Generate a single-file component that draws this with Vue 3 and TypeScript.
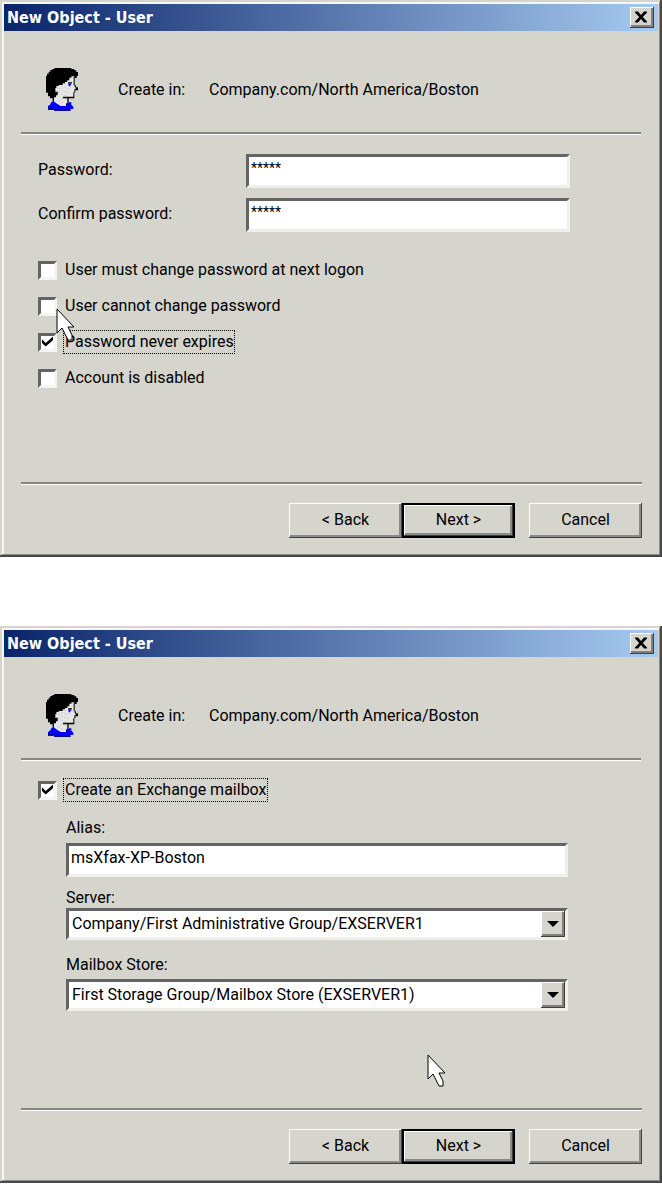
<script setup lang="ts">
import { reactive, ref } from 'vue'

interface Option {
  id: string
  label: string
  checked: boolean
  focused: boolean
}

const title = 'New Object - User'
const location = 'Company.com/North America/Boston'

const password = ref('*****')
const confirmation = ref('*****')

const options = reactive<Option[]>([
  { id: 'must-change', label: 'User must change password at next logon', checked: false, focused: false },
  { id: 'cannot-change', label: 'User cannot change password', checked: false, focused: false },
  { id: 'never-expires', label: 'Password never expires', checked: true, focused: true },
  { id: 'disabled', label: 'Account is disabled', checked: false, focused: false },
])

const createMailbox = ref(true)
const alias = ref('msXfax-XP-Boston')

const lists = reactive([
  { id: 'server', label: 'Server:', value: 'Company/First Administrative Group/EXSERVER1' },
  { id: 'store', label: 'Mailbox Store:', value: 'First Storage Group/Mailbox Store (EXSERVER1)' },
])

const steps = ['password', 'mailbox'] as const
</script>

<template>
  <main class="page">
    <section v-for="step in steps" :key="step" class="window" :aria-label="title">
      <header class="titlebar">
        <h1>{{ title }}</h1>
        <button type="button" class="close" aria-label="Close">
          <svg width="14" height="12" viewBox="0 0 14 12" aria-hidden="true">
            <path d="M1 0.5h3l3 3.5 3-3.5h3v1L8.8 6l4.2 4.5v1h-3L7 8l-3 3.5H1v-1L5.2 6 1 1.5z" />
          </svg>
        </button>
      </header>

      <div class="summary">
        <svg class="face" width="32" height="43" viewBox="6 6 96 129" aria-hidden="true">
          <path d="M32 60L58 48L72 32H89V58L98 68V73L91 75V94H73V122H30V84Z" fill="#e6e6e6" />
          <path d="M62 54h3v3h-3zm-9 6h3v3h-3zm9 3h3v3h-3zm9 3h3v3h-3zm-27 0h3v3h-3zm9 6h3v3h-3zm9 3h3v3h-3zm9 3h3v3h-3zm-27 0h3v3h-3zm9 6h3v3h-3zm9 3h3v3h-3zm-9 9h3v3h-3zm-9 6h3v3h-3zm9 6h3v3h-3zm9-9h3v3h-3z" fill="#b8b8b8" />
          <path d="M31 6H82V9H91V13H97V18H102V30H98V36H91V31H82V35H76V43H70V48H63V52H56V57H44V60H37V66H34V77H41V88H36V94H30V97H18V91H12V80H6V30H9V23H14V17H19V12H25V9H31Z" />
          <path d="M72 49H84V52H72ZM89 34H92V58H89ZM92 58H96V64H102V73H94V79H91V94H88V79H91V70H95V64H92ZM57 92H91V97H57ZM70 97H74V118H70ZM26 94H30V108H26Z" />
          <path d="M73 52H82V56H79V61H74Z" fill="#0000f0" />
          <path d="M23 107H31L39 113L50 120H68V115L75 109H82V116L88 122V129H79V134H30V131H12V120L18 116Z" fill="#0000f8" />
          <path d="M12 127H28V131H12ZM66 112H70V120H66ZM30 131H80V134H30Z" fill="#000070" />
        </svg>
        <span class="caption">Create in:</span>
        <span>{{ location }}</span>
      </div>

      <form v-if="step === 'password'" class="body" @submit.prevent>
        <div class="field">
          <label for="password">Password:</label>
          <input id="password" v-model="password" class="textbox masked" type="text" autocomplete="off" />
        </div>
        <div class="field">
          <label for="confirmation">Confirm password:</label>
          <input id="confirmation" v-model="confirmation" class="textbox masked" type="text" autocomplete="off" />
        </div>
        <div class="options">
          <div v-for="option in options" :key="option.id" class="option">
            <input :id="option.id" v-model="option.checked" type="checkbox" />
            <svg class="tick" viewBox="0 0 12 11" aria-hidden="true"><path d="M0 3L4 7L12 0V4L4 11L0 7Z" /></svg>
            <label :for="option.id" :class="{ focused: option.focused }">{{ option.label }}</label>
            <svg v-if="option.id === 'cannot-change'" class="pointer on-option" viewBox="0 0 19 33" aria-hidden="true">
              <path d="M1 1V25L6 20L12 32H16V27L12 19H18Z" />
            </svg>
          </div>
        </div>
      </form>

      <form v-else class="body" @submit.prevent>
        <div class="option mailbox">
          <input id="mailbox" v-model="createMailbox" type="checkbox" />
          <svg class="tick" viewBox="0 0 12 11" aria-hidden="true"><path d="M0 3L4 7L12 0V4L4 11L0 7Z" /></svg>
          <label for="mailbox" class="focused">Create an Exchange mailbox</label>
        </div>
        <div class="stack">
          <label for="alias">Alias:</label>
          <input id="alias" v-model="alias" class="textbox" type="text" />
        </div>
        <div v-for="list in lists" :key="list.id" class="stack" :class="list.id">
          <label :for="list.id">{{ list.label }}</label>
          <div class="combo">
            <select :id="list.id" v-model="list.value">
              <option>{{ list.value }}</option>
            </select>
            <span class="arrow">
              <svg width="12" height="6" viewBox="0 0 12 6" aria-hidden="true"><path d="M0 0H12L6 6Z" /></svg>
            </span>
          </div>
        </div>
        <svg class="pointer on-canvas" viewBox="0 0 19 33" aria-hidden="true">
          <path d="M1 1V25L6 20L12 32H16V27L12 19H18Z" />
        </svg>
      </form>

      <footer class="actions">
        <button type="button" class="push">&lt; Back</button>
        <button type="button" class="push default">Next &gt;</button>
        <button type="button" class="push cancel">Cancel</button>
      </footer>
    </section>
  </main>
</template>

<style>
body {
  margin: 0;
  background: #fff;
}
</style>

<style scoped>
* {
  box-sizing: border-box;
}

.page {
  display: flex;
  flex-direction: column;
  gap: 69px;
  font: 16px/20px Roboto, "Liberation Sans", sans-serif;
  color: #000;
}

.window {
  display: flex;
  flex-direction: column;
  padding: 4px;
  background: #d6d5cd;
  box-shadow: inset -2px -2px #484848, inset 2px 2px #d6d5cd, inset -3px -3px #8c8c88, inset 4px 4px #f6f6f2;
}

.titlebar {
  display: flex;
  align-items: center;
  justify-content: space-between;
  height: 27px;
  padding: 0 4px 0 3px;
  background: linear-gradient(90deg, #0a246a, #a6caf0);
}

h1 {
  margin: 0;
  font: bold 16px/24px "DejaVu Sans Condensed", "Noto Sans", sans-serif;
  color: #fff;
}

button,
input,
select {
  font: inherit;
  color: inherit;
  border-radius: 0;
}

.close {
  display: grid;
  place-items: center;
  width: 24px;
  height: 21px;
  padding: 0 2px 2px 0;
  border: 0;
  background: #d6d5cd;
  box-shadow: inset -1px -1px #404040, inset 1px 1px #fff, inset -3px -3px #808080;
}

.summary {
  display: flex;
  align-items: center;
  height: 101px;
  margin: 0 17px;
  padding: 16px 0 0 25px;
}

.face {
  flex: none;
  margin-right: 40px;
}

.caption {
  width: 91px;
}

.body {
  position: relative;
  height: 350px;
  margin: 0 17px;
  padding: 20px 71px 0 17px;
  border-top: 2px solid #868682;
  box-shadow: inset 0 1px #fff;
}

.field {
  display: grid;
  grid-template-columns: 208px 1fr;
  margin-bottom: 10px;
}

.field label {
  padding-top: 6px;
}

.textbox {
  width: 100%;
  height: 34px;
  padding: 0 4px 5px 2px;
  border: 3px solid;
  border-color: #646464 #f0f0ea #f0f0ea #646464;
  background: #fff;
  outline: 0;
}

.masked {
  padding-bottom: 6px;
  font-size: 14px;
}

.options {
  display: grid;
  gap: 12px;
  padding-top: 16px;
}

.option {
  position: relative;
  display: flex;
  align-items: center;
  height: 24px;
}

.option input {
  appearance: none;
  width: 19px;
  height: 19px;
  margin: 0 7px 0 0;
  border: 3px solid;
  border-color: #646464 #f4f4f0 #f4f4f0 #646464;
  background: #fff;
}

.option label {
  padding: 1px 0 1px 1px;
}

.focused {
  outline: 1px dotted #000;
}

.tick {
  position: absolute;
  left: 4px;
  top: 6px;
  width: 11px;
  height: 11px;
  pointer-events: none;
  visibility: hidden;
}

input:checked + .tick {
  visibility: visible;
}

.mailbox {
  margin: -2px 0 16px;
}

.stack {
  display: flex;
  flex-direction: column;
  gap: 5px;
  margin-left: 28px;
  margin-right: 2px;
}

.server {
  gap: 0;
  margin-top: 11px;
}

.store {
  gap: 4px;
  margin-top: 15px;
}

.combo {
  display: flex;
  height: 32px;
  border: 3px solid;
  border-color: #646464 #f0f0ea #f0f0ea #646464;
  background: #fff;
}

select {
  appearance: none;
  flex: 1;
  min-width: 0;
  padding: 0 3px;
  border: 0;
  background: #fff;
  outline: 0;
}

.arrow {
  display: grid;
  place-items: center;
  width: 24px;
  background: #d6d5cd;
  box-shadow: inset -1px -1px #404040, inset 1px 1px #fff, inset -3px -3px #808080;
  pointer-events: none;
}

.pointer {
  position: absolute;
  z-index: 1;
  width: 19px;
  height: 33px;
  fill: #fff;
  stroke: #000;
  pointer-events: none;
}

.on-option {
  left: 18px;
  top: 14px;
}

.on-canvas {
  left: 406px;
  top: 294px;
}

.actions {
  display: flex;
  justify-content: flex-end;
  margin: 0 16px 0 17px;
  padding: 19px 0 15px;
  border-top: 2px solid #868682;
  box-shadow: inset 0 1px #fff;
}

.push {
  width: 113px;
  height: 35px;
  padding: 0 0 2px;
  border: 0;
  background: #d6d5cd;
  box-shadow: inset -1px -1px #404040, inset 1px 1px #fff, inset -3px -3px #8a8a86;
}

.default {
  border: 2px solid #000;
  padding: 0 0 1px;
}

.cancel {
  margin-left: 14px;
}
</style>
